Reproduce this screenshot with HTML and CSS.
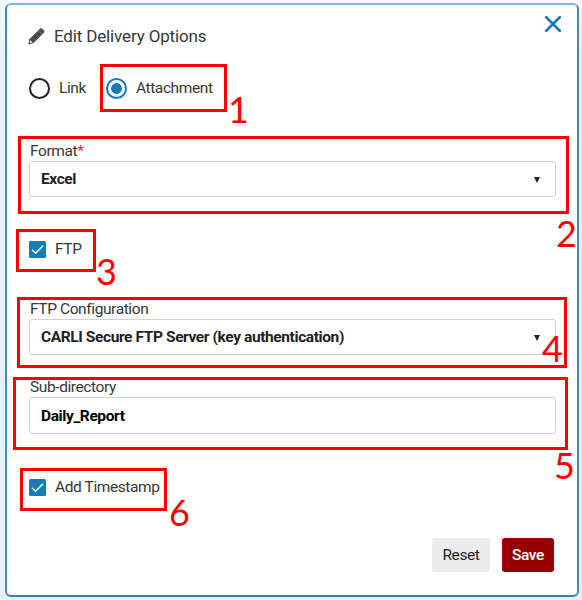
FILE: index.html
```html
<!DOCTYPE html>
<html lang="en">
<head>
<meta charset="utf-8">
<title>Edit Delivery Options</title>
<link rel="stylesheet" href="styles.css">
</head>
<body>
<main class="dialog">
  <header class="header">
    <svg class="pencil" viewBox="0 0 17 17"><path d="M1.3 11.3 10.4 2.2l4 4-9.1 9.1L.4 16.5z" fill="#4a4a4a"/><path d="M10.4 2.2 12 .6c.6-.6 1.4-.6 2 0l2 2c.6.6.6 1.4 0 2l-1.6 1.6z" fill="#4a4a4a"/><path d="m2.2 12.2 2.3 2.3-1.8.5-1-1z" fill="#fff"/></svg>
    <h1 class="title">Edit Delivery Options</h1>
    <svg class="close" viewBox="0 0 16 16"><path d="m2 2 12 12M14 2 2 14" fill="none" stroke="#147cba" stroke-width="2.4" stroke-linecap="round"/></svg>
  </header>
  <div class="radios">
    <label class="choice"><span class="radio"></span><span>Link</span></label>
    <label class="choice"><span class="radio radio-on"></span><span>Attachment</span></label>
  </div>
  <section class="field">
    <div class="label">Format<span class="required">*</span></div>
    <div class="control"><span>Excel</span><span class="arrow"></span></div>
  </section>
  <label class="check check-ftp">
    <svg class="box" viewBox="0 0 17 17"><rect width="17" height="17" rx="1.5" fill="#147cba"/><path d="m3 8.8 3.6 3.4 7.5-7.5" fill="none" stroke="#fff" stroke-width="1.5"/></svg>
    <span>FTP</span>
  </label>
  <section class="field field-config">
    <div class="label">FTP Configuration</div>
    <div class="control"><span>CARLI Secure FTP Server (key authentication)</span><span class="arrow"></span></div>
  </section>
  <section class="field field-directory">
    <div class="label">Sub-directory</div>
    <div class="control control-text"><span>Daily_Report</span></div>
  </section>
  <label class="check check-time">
    <svg class="box" viewBox="0 0 17 17"><rect width="17" height="17" rx="1.5" fill="#147cba"/><path d="m3 8.8 3.6 3.4 7.5-7.5" fill="none" stroke="#fff" stroke-width="1.5"/></svg>
    <span>Add Timestamp</span>
  </label>
  <footer class="actions">
    <span class="button reset">Reset</span>
    <span class="button save">Save</span>
  </footer>
</main>
<div class="mark mark-1"><span class="num">1</span></div>
<div class="mark mark-2"><span class="num">2</span></div>
<div class="mark mark-3"><span class="num">3</span></div>
<div class="mark mark-4"><span class="num">4</span></div>
<div class="mark mark-5"><span class="num">5</span></div>
<div class="mark mark-6"><span class="num">6</span></div>
</body>
</html>
```
FILE: styles.css
```css
* { box-sizing: border-box; }
body {
  position: relative;
  margin: 0;
  height: 600px;
  padding: 3px 3px 2px 5px;
  overflow: hidden;
  background: linear-gradient(#f8fafb, #e8f0f5 60px);
  font: 15.5px/20px Roboto, sans-serif;
  letter-spacing: -0.4px;
  color: #383838;
}
.dialog {
  height: 594px;
  padding: 0 22px 0 22px;
  background: #fefefe;
  border: 2px solid #3b8fc4;
  border-top-color: #79b7db;
  border-bottom-color: #2484bd;
  border-radius: 6px;
}
.header { display: flex; align-items: center; height: 62px; }
.pencil { width: 17px; height: 17px; margin-left: -1px; }
.title { flex: 1; margin: 0 0 1px 9px; font-size: 17px; font-weight: 400; letter-spacing: -0.15px; }
.close { width: 18px; height: 18px; margin: 0 -7px 24px 0; }
.radios { display: flex; gap: 20px; height: 42px; align-items: center; }
.choice { display: flex; align-items: center; gap: 9px; }
.radio { width: 21px; height: 21px; border: 2px solid #222; border-radius: 50%; }
.radio-on { border-color: #147cba; background: radial-gradient(circle, #147cba 5px, transparent 5.7px); }
.field { margin-top: 32px; }
.label { height: 20px; padding-left: 1px; }
.required { color: #f22; }
.control {
  display: flex;
  align-items: center;
  justify-content: space-between;
  width: 527px;
  height: 36px;
  padding: 0 15px 0 11px;
  border: 1px solid #d2d2d2;
  border-radius: 3px;
  background: #fff;
  font-weight: 700;
  color: #222;
}
.arrow { margin-top: 2px; border: 3.5px solid transparent; border-top: 6px solid #222; border-bottom: 0; }
.check { display: flex; align-items: center; gap: 9px; height: 20px; }
.box { width: 17px; height: 17px; }
.check-ftp { margin-top: 42px; }
.field-config { margin-top: 40px; }
.field-directory { margin-top: 22px; }
.field-directory .label { line-height: 21px; }
.control-text { height: 37px; padding-top: 1px; color: #000; }
.check-time { margin-top: 43px; }
.actions { display: flex; gap: 12px; justify-content: flex-end; margin: 41px 1px 0 0; }
.button { display: flex; align-items: center; justify-content: center; height: 34px; border-radius: 3px; }
.reset { width: 58px; background: #ececec; color: #222; }
.save { width: 52px; background: #900; color: #fff; font-weight: 500; }
.mark { position: absolute; border: 3px solid #f00; }
.num { position: absolute; font: 36px/42px Lato, sans-serif; letter-spacing: 0; color: #f00; }
.mark-1 { left: 100px; top: 64px; width: 127px; height: 48px; }
.mark-1 .num { left: 125px; top: 21px; }
.mark-2 { left: 18px; top: 136px; width: 551px; height: 78px; }
.mark-2 .num { left: 535px; top: 73px; }
.mark-3 { left: 16px; top: 229px; width: 80px; height: 43px; }
.mark-3 .num { left: 77px; top: 18px; }
.mark-4 { left: 17px; top: 297px; width: 550px; height: 71px; }
.mark-4 .num { left: 522px; top: 27px; }
.mark-5 { left: 13px; top: 377px; width: 555px; height: 73px; }
.mark-5 .num { left: 538px; top: 64px; }
.mark-6 { left: 20px; top: 468px; width: 147px; height: 43px; }
.mark-6 .num { left: 146px; top: 20px; }
```
